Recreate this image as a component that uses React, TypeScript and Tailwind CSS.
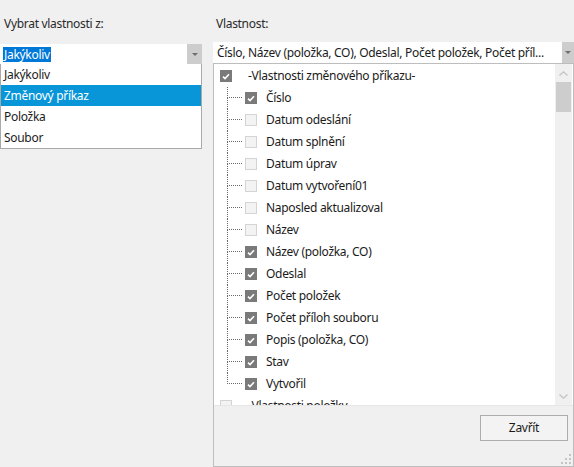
import React from 'react'

const font = { fontFamily: '"Noto Sans", "Open Sans", Arial, sans-serif' }

const sources = ['Jakýkoliv', 'Změnový příkaz', 'Položka', 'Soubor']

const props: { name: string; checked: boolean }[] = [
  { name: 'Číslo', checked: true },
  { name: 'Datum odeslání', checked: false },
  { name: 'Datum splnění', checked: false },
  { name: 'Datum úprav', checked: false },
  { name: 'Datum vytvoření01', checked: false },
  { name: 'Naposled aktualizoval', checked: false },
  { name: 'Název', checked: false },
  { name: 'Název (položka, CO)', checked: true },
  { name: 'Odeslal', checked: true },
  { name: 'Počet položek', checked: true },
  { name: 'Počet příloh souboru', checked: true },
  { name: 'Popis (položka, CO)', checked: true },
  { name: 'Stav', checked: true },
  { name: 'Vytvořil', checked: true },
]

function Check({ checked }: { checked: boolean }) {
  if (!checked) {
    return <div className="w-[12px] h-[12px] shrink-0 bg-[#f3f3f3] border border-[#d4d4d4]" />
  }
  return (
    <div className="w-[12px] h-[12px] shrink-0 bg-[#7a7a7a] flex items-center justify-center">
      <svg width="8" height="7" viewBox="0 0 8 7">
        <path d="M1 3.6 L3 5.5 L7 1.3" fill="none" stroke="#fff" strokeWidth="1.6" />
      </svg>
    </div>
  )
}

function DropArrow({ w }: { w: string }) {
  return (
    <div className={`${w} h-full bg-[#cdcdcd] flex items-center justify-center`}>
      <svg width="6" height="3" viewBox="0 0 6 3">
        <path d="M0 0 H6 L3 3 Z" fill="#6e6e6e" />
      </svg>
    </div>
  )
}

function TreeChild({ name, checked, last }: { name: string; checked: boolean; last: boolean }) {
  return (
    <div className="h-[22px] flex items-center">
      <div className="w-[13px] shrink-0" />
      {/* connector lines */}
      <div className="w-[15px] h-full shrink-0 flex flex-col">
        <div className="h-[11px] border-l border-b border-dotted border-[#6a6a6a]" />
        <div className={`flex-1 ${last ? '' : 'border-l border-dotted border-[#6a6a6a]'}`} />
      </div>
      <div className="w-[3px] shrink-0" />
      <Check checked={checked} />
      <span className="ml-[9px] whitespace-nowrap text-[#1b1b1b]">{name}</span>
    </div>
  )
}

export default function App() {
  return (
    <div
      className="w-[574px] h-[467px] bg-[#f0f0f0] flex text-[12px] leading-[16px] tracking-[-0.3px] overflow-hidden"
      style={font}
    >
      {/* Left: source */}
      <div className="w-[202px] shrink-0 flex flex-col pt-[14px]">
        <div className="h-[20px] leading-[20px] pl-[4px] text-[#2a2a2a]">Vybrat vlastnosti z:</div>
        <div className="mt-[10px] h-[20px] flex bg-white">
          <div className="flex-1 flex items-center pl-[3px]">
            <span className="bg-[#0078d7] text-white px-[1px] leading-[15px]">Jakýkoliv</span>
          </div>
          <DropArrow w="w-[15px]" />
        </div>
        <div className="border border-t-0 border-[#a9a9a9] bg-white">
          {sources.map((s, i) => (
            <div
              key={s}
              className={`h-[21px] flex items-center pl-[3px] ${
                i === 1 ? 'bg-[#0896d8] text-white' : 'text-[#1b1b1b]'
              }`}
            >
              {s}
            </div>
          ))}
        </div>
      </div>

      {/* Right: property */}
      <div className="ml-[11px] w-[361px] shrink-0 flex flex-col pt-[14px]">
        <div className="h-[20px] leading-[20px] pl-[3px] text-[#2a2a2a]">Vlastnost:</div>
        <div className="mt-[8px] h-[21px] flex bg-white">
          <div className="flex-1 min-w-0 flex items-center pl-[4px] pr-[2px] overflow-hidden">
            <span className="whitespace-nowrap text-[#1b1b1b]">
              Číslo, Název (položka, CO), Odeslal, Počet položek, Počet příl...
            </span>
          </div>
          <DropArrow w="w-[12px]" />
        </div>

        <div className="h-[404px] border border-[#bdbdbd] flex flex-col">
          <div className="h-[341px] bg-white flex">
            <div className="flex-1 min-w-0 overflow-hidden pt-[1px]">
              <div className="h-[22px] flex items-center">
                <div className="w-[6px] shrink-0" />
                <Check checked />
                <span className="ml-[16px] whitespace-nowrap text-[#1b1b1b]">
                  -Vlastnosti změnového příkazu-
                </span>
              </div>
              {props.map((p, i) => (
                <TreeChild key={p.name} name={p.name} checked={p.checked} last={i === props.length - 1} />
              ))}
              <div className="h-[22px] flex items-center">
                <div className="w-[6px] shrink-0" />
                <Check checked={false} />
                <span className="ml-[16px] whitespace-nowrap text-[#1b1b1b]">-Vlastnosti položky-</span>
              </div>
            </div>

            {/* scrollbar */}
            <div className="w-[17px] mr-[1px] bg-[#f0f0f0] flex flex-col">
              <div className="h-[18px] flex items-center justify-center">
                <svg width="9" height="5" viewBox="0 0 9 5">
                  <path d="M0.5 4.5 L4.5 0.8 L8.5 4.5" fill="none" stroke="#c2c2c2" strokeWidth="1.2" />
                </svg>
              </div>
              <div className="h-[30px] mx-[1px] bg-[#cdcdcd]" />
              <div className="flex-1" />
              <div className="h-[18px] flex items-center justify-center">
                <svg width="9" height="5" viewBox="0 0 9 5">
                  <path d="M0.5 0.5 L4.5 4.2 L8.5 0.5" fill="none" stroke="#c2c2c2" strokeWidth="1.2" />
                </svg>
              </div>
            </div>
          </div>

          <div className="flex-1 flex flex-col border-t border-[#e6e6e6]">
            <div className="flex justify-end pt-[9px] pr-[5px]">
              <button className="w-[88px] h-[26px] border border-[#adadad] bg-[#f3f3f3] text-[#1b1b1b]">
                Zavřít
              </button>
            </div>
            <div className="mt-auto flex justify-end pr-[2px] pb-[2px]">
              <svg width="10" height="10" viewBox="0 0 10 10">
                <rect x="8" y="0" width="2" height="2" fill="#c4c4c4" />
                <rect x="4" y="4" width="2" height="2" fill="#c4c4c4" />
                <rect x="8" y="4" width="2" height="2" fill="#c4c4c4" />
                <rect x="0" y="8" width="2" height="2" fill="#c4c4c4" />
                <rect x="4" y="8" width="2" height="2" fill="#c4c4c4" />
                <rect x="8" y="8" width="2" height="2" fill="#c4c4c4" />
              </svg>
            </div>
          </div>
        </div>
      </div>
    </div>
  )
}
